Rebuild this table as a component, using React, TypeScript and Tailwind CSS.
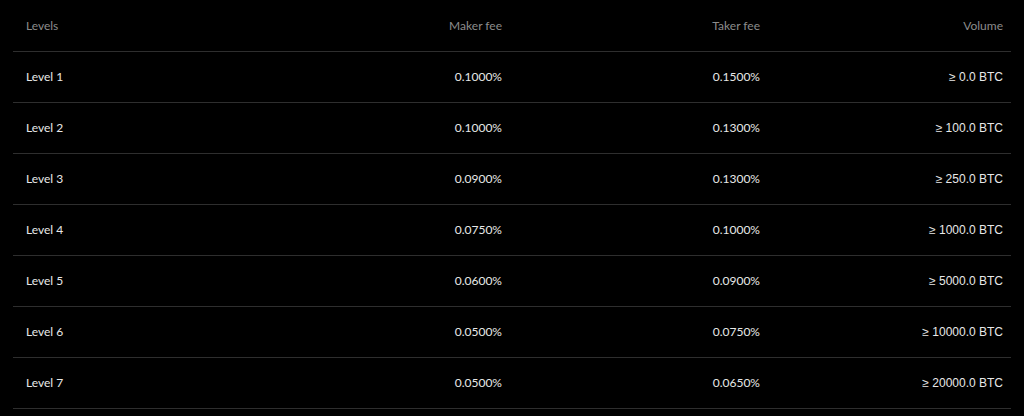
const rows = [
  { level: "Level 1", maker: "0.1000%", taker: "0.1500%", volume: "≥ 0.0 BTC" },
  { level: "Level 2", maker: "0.1000%", taker: "0.1300%", volume: "≥ 100.0 BTC" },
  { level: "Level 3", maker: "0.0900%", taker: "0.1300%", volume: "≥ 250.0 BTC" },
  { level: "Level 4", maker: "0.0750%", taker: "0.1000%", volume: "≥ 1000.0 BTC" },
  { level: "Level 5", maker: "0.0600%", taker: "0.0900%", volume: "≥ 5000.0 BTC" },
  { level: "Level 6", maker: "0.0500%", taker: "0.0750%", volume: "≥ 10000.0 BTC" },
  { level: "Level 7", maker: "0.0500%", taker: "0.0650%", volume: "≥ 20000.0 BTC" },
];

export default function App() {
  return (
    <div className="min-h-screen w-full bg-black px-[13px] font-['Lato',sans-serif] text-[12px]">
      {/* header */}
      <div className="grid h-[52px] grid-cols-[250px_252px_258px_243px] items-center border-b border-[#2e2e2e] text-[#8c8c8c]">
        <div className="pl-[13px]">Levels</div>
        <div className="pr-[13px] text-right">Maker fee</div>
        <div className="pr-[13px] text-right">Taker fee</div>
        <div className="pr-[13px] text-right">Volume</div>
      </div>
      {rows.map((r) => (
        <div
          key={r.level}
          className="grid h-[51px] grid-cols-[250px_252px_258px_243px] items-center border-b border-[#2e2e2e] text-[#e8e8e8]"
        >
          <div className="pl-[13px]">{r.level}</div>
          <div className="pr-[13px] text-right">{r.maker}</div>
          <div className="pr-[13px] text-right">{r.taker}</div>
          <div className="pr-[13px] text-right font-['Liberation_Sans',sans-serif]">{r.volume}</div>
        </div>
      ))}
    </div>
  );
}
